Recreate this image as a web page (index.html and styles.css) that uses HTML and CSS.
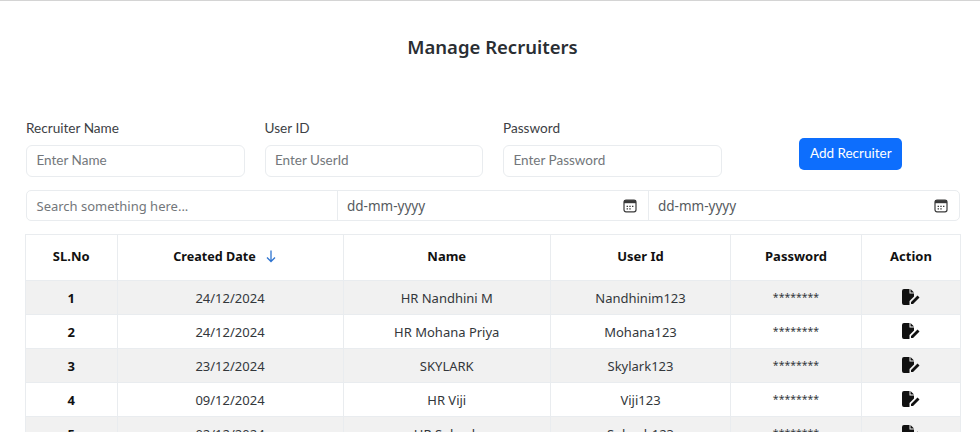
FILE: index.html
```html
<!DOCTYPE html>
<html lang="en">
<head>
<meta charset="utf-8">
<title>Manage Recruiters</title>
<link rel="stylesheet" href="styles.css">
</head>
<body>
<main class="page">
  <h1 class="title">Manage Recruiters</h1>
  <form class="add-form">
    <div class="field"><label class="label">Recruiter Name</label><div class="input">Enter Name</div></div>
    <div class="field"><label class="label">User ID</label><div class="input">Enter UserId</div></div>
    <div class="field"><label class="label">Password</label><div class="input">Enter Password</div></div>
    <div class="button-cell"><button type="button" class="add-btn">Add Recruiter</button></div>
  </form>
  <div class="filters">
    <div class="filter filter-search">Search something here...</div>
    <div class="filter filter-date">dd-mm-yyyy
      <svg class="cal" viewBox="0 0 14 14" width="14" height="14"><rect x="1" y="1.2" width="12" height="11.6" rx="2" fill="none" stroke="#3a3a3a" stroke-width="1.2"/><rect x="1" y="1.2" width="12" height="3" fill="#3a3a3a"/><path d="M3.6 6.7h1.4v1.3H3.6zM6.3 6.7h1.4v1.3H6.3zM9 6.7h1.4v1.3H9zM3.6 9.3h1.4v1.3H3.6zM6.3 9.3h1.4v1.3H6.3z" fill="#3a3a3a"/></svg>
    </div>
    <div class="filter filter-date">dd-mm-yyyy
      <svg class="cal" viewBox="0 0 14 14" width="14" height="14"><rect x="1" y="1.2" width="12" height="11.6" rx="2" fill="none" stroke="#3a3a3a" stroke-width="1.2"/><rect x="1" y="1.2" width="12" height="3" fill="#3a3a3a"/><path d="M3.6 6.7h1.4v1.3H3.6zM6.3 6.7h1.4v1.3H6.3zM9 6.7h1.4v1.3H9zM3.6 9.3h1.4v1.3H3.6zM6.3 9.3h1.4v1.3H6.3z" fill="#3a3a3a"/></svg>
    </div>
  </div>
  <table class="table">
    <colgroup><col class="c1"><col class="c2"><col class="c3"><col class="c4"><col class="c5"><col class="c6"></colgroup>
    <thead>
      <tr>
        <th><span class="head">SL.No</span></th>
        <th><span class="head sort">Created Date<svg viewBox="0 0 12 14" width="12" height="14"><path d="M6 1.5v11M2 8.500l4 4 4-4" fill="none" stroke="#2f74d0" stroke-width="1.3"/></svg></span></th>
        <th><span class="head">Name</span></th><th><span class="head">User Id</span></th><th><span class="head">Password</span></th><th><span class="head">Action</span></th>
      </tr>
    </thead>
    <tbody>
      <tr><td class="num">1</td><td>24/12/2024</td><td>HR Nandhini M</td><td>Nandhinim123</td><td class="pw">********</td><td><svg class="act" viewBox="0 0 18 16" width="18" height="16"><path d="M0 2a2 2 0 0 1 2-2h5.500v4.500H12V7.500L7.500 12V16H2a2 2 0 0 1-2-2zM8.500 0L12 3.500H8.500zM9 13l6.500-6.500 2 2L11 15H9z" fill="#111"/></svg></td></tr>
      <tr><td class="num">2</td><td>24/12/2024</td><td>HR Mohana Priya</td><td>Mohana123</td><td class="pw">********</td><td><svg class="act" viewBox="0 0 18 16" width="18" height="16"><path d="M0 2a2 2 0 0 1 2-2h5.500v4.500H12V7.500L7.500 12V16H2a2 2 0 0 1-2-2zM8.500 0L12 3.500H8.500zM9 13l6.500-6.500 2 2L11 15H9z" fill="#111"/></svg></td></tr>
      <tr><td class="num">3</td><td>23/12/2024</td><td>SKYLARK</td><td>Skylark123</td><td class="pw">********</td><td><svg class="act" viewBox="0 0 18 16" width="18" height="16"><path d="M0 2a2 2 0 0 1 2-2h5.500v4.500H12V7.500L7.500 12V16H2a2 2 0 0 1-2-2zM8.500 0L12 3.500H8.500zM9 13l6.500-6.500 2 2L11 15H9z" fill="#111"/></svg></td></tr>
      <tr><td class="num">4</td><td>09/12/2024</td><td>HR Viji</td><td>Viji123</td><td class="pw">********</td><td><svg class="act" viewBox="0 0 18 16" width="18" height="16"><path d="M0 2a2 2 0 0 1 2-2h5.500v4.500H12V7.500L7.500 12V16H2a2 2 0 0 1-2-2zM8.500 0L12 3.500H8.500zM9 13l6.500-6.500 2 2L11 15H9z" fill="#111"/></svg></td></tr>
      <tr><td class="num">5</td><td>02/12/2024</td><td>HR Suhash</td><td>Suhash123</td><td class="pw">********</td><td><svg class="act" viewBox="0 0 18 16" width="18" height="16"><path d="M0 2a2 2 0 0 1 2-2h5.500v4.500H12V7.500L7.500 12V16H2a2 2 0 0 1-2-2zM8.500 0L12 3.500H8.500zM9 13l6.500-6.500 2 2L11 15H9z" fill="#111"/></svg></td></tr>
    </tbody>
  </table>
</main>
</body>
</html>
```
FILE: styles.css
```css
* { box-sizing: border-box; }
html, body { margin: 0; height: 432px; overflow: hidden; background: #fff; }
body { font-family: "Noto Sans", "Open Sans", sans-serif; color: #212529; border-top: 1px solid #d4d4d4; }
.page { padding: 0 20px 0 25px; }
.title { margin: 0; padding-top: 32px; height: 120px; text-align: center; font-size: 18.5px; line-height: 28px; font-weight: 600; color: #2a2e33; }
.add-form { display: grid; grid-template-columns: 218.5px 218.5px 218.5px 1fr; column-gap: 20px; height: 69px; margin-left: 1px; }
.field { display: flex; flex-direction: column; }
.label { font-family: Lato, sans-serif; font-size: 13.6px; line-height: 15px; color: #3d4145; height: 24px; }
.input { height: 32px; border: 1px solid #e9ecef; border-radius: 6px; padding: 0 9.5px; font-family: Lato, sans-serif; font-size: 13.5px; line-height: 29px; color: #73777b; }
.button-cell { display: flex; justify-content: center; padding-top: 17px; }
.add-btn { width: 103px; height: 32px; border: 0; border-radius: 5px; background: #0d6efd; color: #fff; font-family: Lato, sans-serif; font-size: 13.5px; padding: 0 0 2px; }
.filters { display: grid; grid-template-columns: 309.5px 311px 1fr; height: 31px; border: 1px solid #e9ecef; border-radius: 5px; margin-left: 1px; }
.filter { display: flex; align-items: center; justify-content: space-between; padding: 0 11px 0 9.5px; font-size: 13px; color: #73777b; }
.filter-date { border-left: 1px solid #e9ecef; color: #555a5e; font-size: 13.5px; }
.cal { flex: none; }
.table { width: 935px; margin-top: 13px; border-collapse: collapse; table-layout: fixed; font-size: 13px; color: #33373b; }
.c1 { width: 91.5px; } .c2 { width: 226px; } .c3 { width: 207.5px; } .c4 { width: 180px; } .c5 { width: 131px; } .c6 { width: 99px; }
th, td { border: 1px solid #e9ecef; text-align: center; padding: 0; vertical-align: middle; }
thead tr { height: 46px; }
th { font-weight: 700; color: #111; font-size: 13px; }
.head { display: block; padding-bottom: 4px; }
tbody tr { height: 34px; }
tbody tr:nth-child(odd) { background: #f1f1f1; }
.num { font-weight: 700; color: #111; }
.pw { font-size: 10.5px; padding-bottom: 1px; }
.sort { display: inline-flex; align-items: center; gap: 9px; font-size: 12.6px; padding-right: 10px; }
.act { display: block; margin: -2px auto 0; }
```
